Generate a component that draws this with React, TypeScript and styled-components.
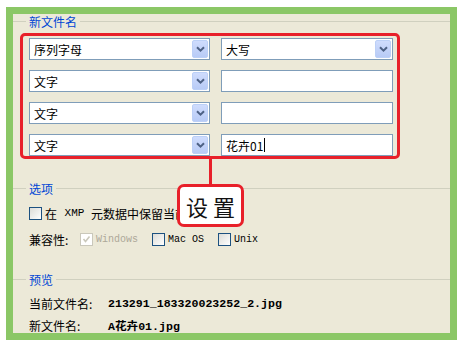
import React from "react";
import styled, { createGlobalStyle } from "styled-components";

const GlobalStyle = createGlobalStyle`
  html, body {
    margin: 0;
    padding: 0;
    background: #ffffff;
  }
  body {
    font-family: "Noto Sans CJK SC", "Liberation Sans", sans-serif;
    font-size: 12px;
    color: #000;
  }
`;

const cjk = `"Noto Sans CJK SC", sans-serif`;
const mono = `"Liberation Mono", "Noto Sans CJK SC", monospace`;

const Page = styled.div`
  padding: 7px 0 0 6px;
`;

const Frame = styled.div`
  position: relative;
  box-sizing: border-box;
  width: 451px;
  height: 333px;
  border: 7px solid #8bc766;
  background: #ece9d8;
  overflow: hidden;
  display: flex;
  flex-direction: column;
`;

const LegendRow = styled.div<{ $mt: number }>`
  display: flex;
  align-items: center;
  height: 16px;
  margin-top: ${({ $mt }) => $mt}px;
`;

const LegendLine = styled.div<{ $w?: number }>`
  height: 1px;
  margin-top: -2px;
  background: #d0d0bf;
  ${({ $w }) => ($w ? `width: ${$w}px;` : "flex: 1;")}
`;

const LegendText = styled.span`
  font-family: ${cjk};
  font-size: 12px;
  line-height: 16px;
  color: #0046d5;
  padding: 0 3px;
`;

const Divider = styled.div<{ $mt: number }>`
  height: 1px;
  background: #d0d0bf;
  margin-top: ${({ $mt }) => $mt}px;
`;

const RedBox = styled.div`
  box-sizing: border-box;
  width: 380px;
  margin: 3px 0 0 7px;
  padding: 2px 4px 0 6px;
  border: 3px solid #e8202a;
  border-radius: 5px;
  display: grid;
  grid-template-columns: 181px 172px;
  column-gap: 11px;
  row-gap: 10px;
`;

const FieldBox = styled.div`
  box-sizing: border-box;
  position: relative;
  height: 22px;
  border: 1px solid #7f9db9;
  background: #fff;
  display: flex;
  align-items: center;
  padding-left: 4px;
  font-family: ${cjk};
  font-size: 12px;
`;

const DropButton = styled.div`
  position: absolute;
  right: 1px;
  top: 1px;
  box-sizing: border-box;
  width: 16px;
  height: 18px;
  border: 1px solid #bcd0f7;
  border-radius: 2px;
  background: linear-gradient(#cfdcfd, #b8cbf6);
  display: flex;
  align-items: center;
  justify-content: center;
`;

const Caret = styled.span`
  display: inline-block;
  width: 1px;
  height: 14px;
  background: #000;
  margin-left: 1px;
`;

const Chevron = () => (
  <svg width="9" height="6" viewBox="0 0 9 6">
    <path d="M1 1.2 L4.5 4.6 L8 1.2" fill="none" stroke="#4d6185" strokeWidth="2" />
  </svg>
);

const Select: React.FC<{ value: string }> = ({ value }) => (
  <FieldBox>
    {value}
    <DropButton>
      <Chevron />
    </DropButton>
  </FieldBox>
);

const Row = styled.div<{ $mt: number; $pl?: number }>`
  display: flex;
  align-items: center;
  height: 16px;
  margin-top: ${({ $mt }) => $mt}px;
  padding-left: ${({ $pl }) => $pl ?? 16}px;
  white-space: nowrap;
  font-family: ${mono};
  font-size: 12px;
`;

const Box = styled.span<{ $disabled?: boolean }>`
  box-sizing: border-box;
  width: 13px;
  height: 13px;
  flex: none;
  border: 1px solid ${({ $disabled }) => ($disabled ? "#cac8bb" : "#1c5180")};
  background: ${({ $disabled }) =>
    $disabled ? "#fff" : "linear-gradient(135deg, #dcdcd7, #ffffff)"};
  display: flex;
  align-items: center;
  justify-content: center;
  margin-right: 3px;
`;

const CheckWrap = styled.label<{ $ml: number; $disabled?: boolean }>`
  display: flex;
  align-items: center;
  margin-left: ${({ $ml }) => $ml}px;
  font-family: ${mono};
  font-size: 10px;
  color: ${({ $disabled }) => ($disabled ? "#aca899" : "#000")};
`;

const Check: React.FC<{ label: string; disabled?: boolean; checked?: boolean; ml?: number }> = ({
  label,
  disabled,
  checked,
  ml = 0,
}) => (
  <CheckWrap $ml={ml} $disabled={disabled}>
    <Box $disabled={disabled}>
      {checked && (
        <svg width="9" height="9" viewBox="0 0 9 9">
          <path d="M1.5 4 L3.5 6.5 L7.5 1.5" fill="none" stroke="#cac8bb" strokeWidth="1.6" />
        </svg>
      )}
    </Box>
    {label}
  </CheckWrap>
);

const CjkLabel = styled.span<{ $w?: number }>`
  font-family: ${cjk};
  font-size: 12px;
  ${({ $w }) => ($w ? `width: ${$w}px;` : "")}
`;

const Value = styled.span`
  font-family: ${mono};
  font-weight: bold;
  font-size: 11.6px;
`;

const XmpText = styled.span`
  font-family: ${mono};
  font-size: 11px;
  margin-left: 1px;
`;

const Callout = styled.div`
  position: absolute;
  left: 164px;
  top: 145px;
  display: flex;
  flex-direction: column;
`;

const Connector = styled.div`
  width: 3px;
  height: 25px;
  margin-left: 32px;
  background: #e8202a;
`;

const CalloutBox = styled.div`
  box-sizing: border-box;
  width: 67px;
  height: 43px;
  border: 3px solid #e8202a;
  border-radius: 7px;
  background: #fff;
  display: flex;
  align-items: center;
  justify-content: center;
  white-space: nowrap;
  font-family: ${cjk};
  font-size: 22px;
  line-height: 26px;
  font-weight: 400;
  letter-spacing: 5px;
  padding-left: 5px;
  color: #111;
`;

export default function App() {
  return (
    <Page>
      <GlobalStyle />
      <Frame>
        <LegendRow $mt={0}>
          <LegendLine $w={13} />
          <LegendText>新文件名</LegendText>
          <LegendLine />
        </LegendRow>

        <RedBox>
          <Select value="序列字母" />
          <Select value="大写" />
          <Select value="文字" />
          <FieldBox />
          <Select value="文字" />
          <FieldBox />
          <Select value="文字" />
          <FieldBox>
            花卉01
            <Caret />
          </FieldBox>
        </RedBox>

        <Divider $mt={9} />

        <LegendRow $mt={13}>
          <LegendLine $w={13} />
          <LegendText>选项</LegendText>
          <LegendLine />
        </LegendRow>

        <Row $mt={8}>
          <Box />
          <CjkLabel>在</CjkLabel>
          <XmpText>&nbsp;XMP&nbsp;</XmpText>
          <CjkLabel>元数据中保留当前文件名</CjkLabel>
        </Row>

        <Row $mt={10}>
          <CjkLabel $w={51}>兼容性:</CjkLabel>
          <Check label="Windows" disabled checked />
          <Check label="Mac OS" ml={14} />
          <Check label="Unix" ml={14} />
        </Row>

        <Divider $mt={10} />

        <LegendRow $mt={15}>
          <LegendLine $w={13} />
          <LegendText>预览</LegendText>
          <LegendLine />
        </LegendRow>

        <Row $mt={7}>
          <CjkLabel $w={79}>当前文件名:</CjkLabel>
          <Value>213291_183320023252_2.jpg</Value>
        </Row>
        <Row $mt={6}>
          <CjkLabel $w={79}>新文件名:</CjkLabel>
          <Value>A花卉01.jpg</Value>
        </Row>

        <Callout>
          <Connector />
          <CalloutBox>设置</CalloutBox>
        </Callout>
      </Frame>
    </Page>
  );
}
